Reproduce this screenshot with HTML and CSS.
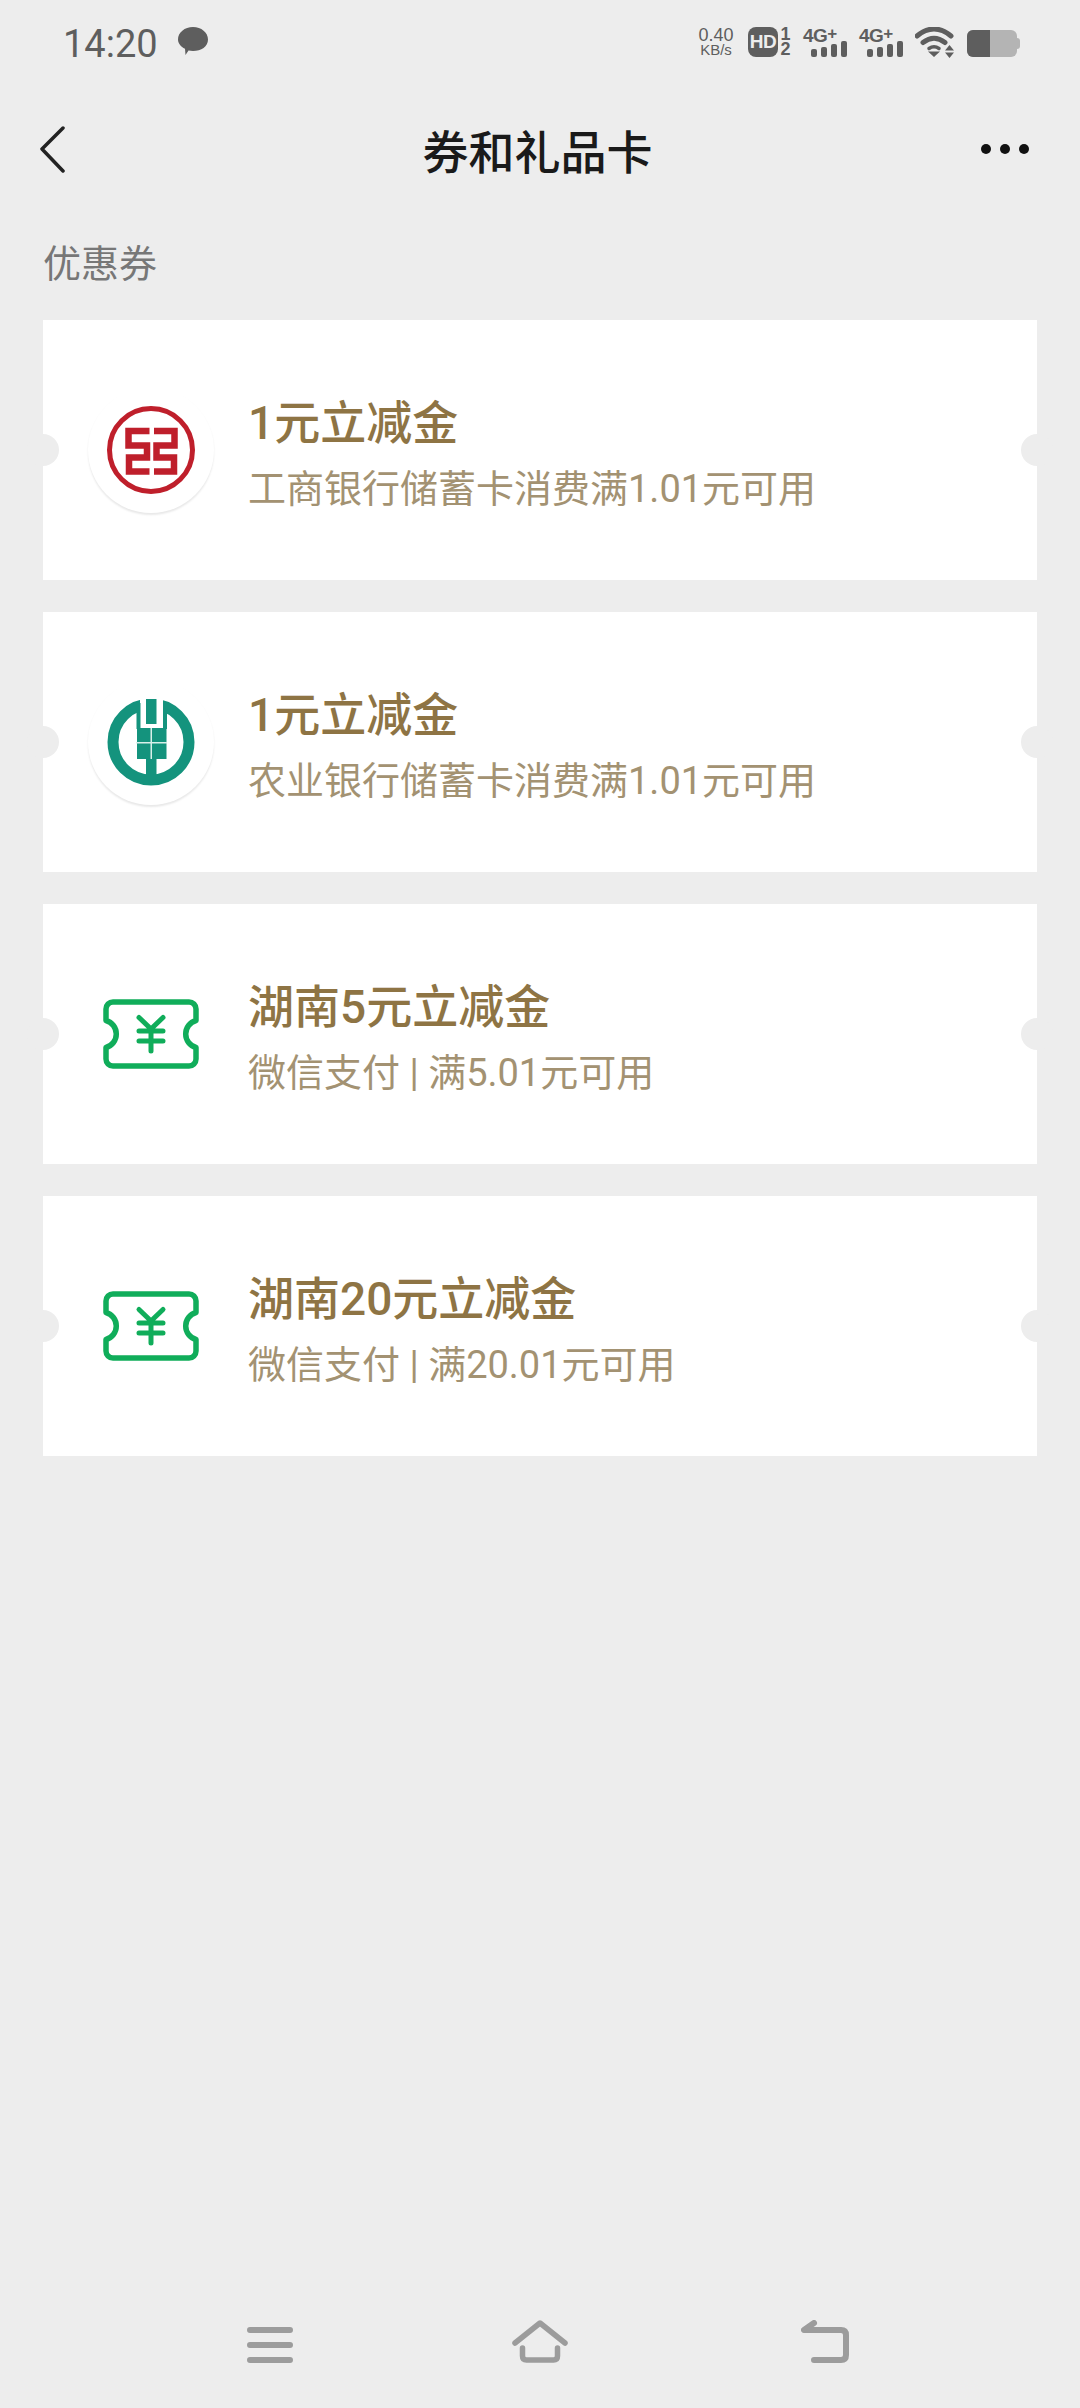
FILE: index.html
```html
<!DOCTYPE html>
<html>
<head>
    <meta charset="utf-8">
    <link rel="stylesheet" href="styles.css">
</head>
<body>
    <div class="page">
        <div class="status-bar">
            <div class="status-left">
                <span class="clock">14:20</span>
                <svg class="chat-icon" width="30" height="28" viewBox="0 0 30 28"><path d="M15 0C23.3 0 30 5.5 30 12.5C30 19.5 23.3 24 15 24C13.5 24 12 23.8 10.5 23.5L7.5 28L7 21.8C2.8 19.7 0 16.4 0 12.5C0 5.5 6.7 0 15 0Z" fill="#5e5e5e"/></svg>
            </div>
            <div class="status-right">
                <div class="net-speed"><span class="speed-num">0.40</span><span class="speed-unit">KB/s</span></div>
                <div class="hd-group">
                    <span class="hd-box">HD</span>
                    <div class="sim-nums"><span>1</span><span>2</span></div>
                </div>
                <div class="net-icon">
                    <div class="net-label">4G<span class="net-plus">+</span></div>
                    <div class="net-bars"><span class="net-bar b1"></span><span class="net-bar b2"></span><span class="net-bar b3"></span><span class="net-bar b4"></span></div>
                </div>
                <div class="net-icon">
                    <div class="net-label">4G<span class="net-plus">+</span></div>
                    <div class="net-bars"><span class="net-bar b1"></span><span class="net-bar b2"></span><span class="net-bar b3"></span><span class="net-bar b4"></span></div>
                </div>
                <svg class="wifi-icon" width="40" height="31" viewBox="0 0 40 31">
                    <path d="M2 9Q19 -5 36 9M8 15.5Q19 7 30 15.5" fill="none" stroke="#5e5e5e" stroke-width="5" stroke-linecap="round"/>
                    <path d="M14 21.5Q19 18 24 21.5" fill="none" stroke="#5e5e5e" stroke-width="3.5" stroke-linecap="round"/>
                    <path d="M13 24.5H25L19 30ZM30 23.5H39L34.5 18ZM30 25.5H39L34.5 31Z" fill="#5e5e5e"/>
                </svg>
                <div class="battery">
                    <div class="battery-body"><div class="battery-level"></div></div>
                    <div class="battery-nub"></div>
                </div>
            </div>
        </div>

        <div class="title-bar">
            <div class="bar-side">
                <svg width="26" height="48" viewBox="0 0 26 48"><path d="M23 3L2 24L23 46" fill="none" stroke="#222" stroke-width="3.5" stroke-linecap="round" stroke-linejoin="round"/></svg>
            </div>
            <div class="bar-title">券和礼品卡</div>
            <div class="bar-side bar-side-right">
                <div class="more-dots"><span class="dot"></span><span class="dot"></span><span class="dot"></span></div>
            </div>
        </div>

        <div class="section-label">优惠券</div>

        <div class="coupon-list">
            <div class="coupon">
                <div class="coupon-badge">
                    <svg width="100" height="100" viewBox="0 0 100 100">
                        <circle cx="50" cy="50" r="41.5" fill="none" stroke="#bf1f2b" stroke-width="5"/>
                        <path d="M48.5 31H27.5V45.5H46V57.5H28V71.5H48.5" fill="none" stroke="#bf1f2b" stroke-width="6.5"/>
                        <path d="M53 31H73.5V45.5H55.5V57.5H73V71.5H53" fill="none" stroke="#bf1f2b" stroke-width="6.5"/>
                    </svg>
                </div>
                <div class="coupon-text">
                    <div class="coupon-title">1元立减金</div>
                    <div class="coupon-desc">工商银行储蓄卡消费满1.01元可用</div>
                </div>
            </div>

            <div class="coupon">
                <div class="coupon-badge">
                    <svg width="100" height="100" viewBox="0 0 100 100">
                        <circle cx="50" cy="50" r="38" fill="none" stroke="#14937d" stroke-width="11"/>
                        <rect x="39" y="0" width="23" height="36" fill="#fff"/>
                        <rect x="35.5" y="11" width="4" height="26" fill="#14937d"/>
                        <rect x="62" y="11" width="4" height="26" fill="#14937d"/>
                        <rect x="45" y="7" width="10.5" height="25" fill="#14937d"/>
                        <rect x="36" y="36" width="29.5" height="31" fill="#14937d"/>
                        <rect x="45" y="67" width="10.5" height="24" fill="#14937d"/>
                        <rect x="49.5" y="36" width="1.5" height="31" fill="#d8efe9"/>
                        <rect x="35" y="50" width="31" height="1.5" fill="#d8efe9"/>
                    </svg>
                </div>
                <div class="coupon-text">
                    <div class="coupon-title">1元立减金</div>
                    <div class="coupon-desc">农业银行储蓄卡消费满1.01元可用</div>
                </div>
            </div>

            <div class="coupon">
                <div class="coupon-badge coupon-badge-plain">
                    <svg width="96" height="70" viewBox="0 0 96 70">
                        <path d="M10 3H86A7 7 0 0 1 93 10V21.5A14 14 0 0 0 93 48.5V60A7 7 0 0 1 86 67H10A7 7 0 0 1 3 60V48.5A14 14 0 0 0 3 21.5V10A7 7 0 0 1 10 3Z" fill="none" stroke="#10ad5a" stroke-width="5.5" stroke-linejoin="round"/>
                        <path d="M36 18.5L48 30L60 18.5M36 32H60M36 42H60M48 30V52" fill="none" stroke="#10ad5a" stroke-width="5" stroke-linecap="round" stroke-linejoin="round"/>
                    </svg>
                </div>
                <div class="coupon-text">
                    <div class="coupon-title">湖南5元立减金</div>
                    <div class="coupon-desc">微信支付 | 满5.01元可用</div>
                </div>
            </div>

            <div class="coupon">
                <div class="coupon-badge coupon-badge-plain">
                    <svg width="96" height="70" viewBox="0 0 96 70">
                        <path d="M10 3H86A7 7 0 0 1 93 10V21.5A14 14 0 0 0 93 48.5V60A7 7 0 0 1 86 67H10A7 7 0 0 1 3 60V48.5A14 14 0 0 0 3 21.5V10A7 7 0 0 1 10 3Z" fill="none" stroke="#10ad5a" stroke-width="5.5" stroke-linejoin="round"/>
                        <path d="M36 18.5L48 30L60 18.5M36 32H60M36 42H60M48 30V52" fill="none" stroke="#10ad5a" stroke-width="5" stroke-linecap="round" stroke-linejoin="round"/>
                    </svg>
                </div>
                <div class="coupon-text">
                    <div class="coupon-title">湖南20元立减金</div>
                    <div class="coupon-desc">微信支付 | 满20.01元可用</div>
                </div>
            </div>
        </div>

        <div class="nav-bar">
            <svg class="nav-menu" width="46" height="46" viewBox="0 0 46 46"><path d="M3 10H43M3 25H43M3 40H43" fill="none" stroke="#9c9c9c" stroke-width="6" stroke-linecap="round"/></svg>
            <svg class="nav-home" width="56" height="46" viewBox="0 0 56 46"><path d="M3 23L28 3L53 23" fill="none" stroke="#9c9c9c" stroke-width="5.5" stroke-linecap="round" stroke-linejoin="round"/><path d="M10.5 28V36Q10.5 40 14.5 40H41.5Q45.5 40 45.5 36V28" fill="none" stroke="#9c9c9c" stroke-width="5.5" stroke-linecap="round"/></svg>
            <svg class="nav-back" width="48" height="46" viewBox="0 0 48 46"><path d="M13 3L3 10H40Q45 10 45 15V35Q45 40 40 40H13" fill="none" stroke="#9c9c9c" stroke-width="6" stroke-linecap="round" stroke-linejoin="round"/></svg>
        </div>
    </div>
</body>
</html>
```

FILE: styles.css
```css
* {
    box-sizing: border-box;
}

html, body {
    margin: 0;
    padding: 0;
}

body {
    background-color: #ededed;
    font-family: Roboto, "Noto Sans CJK SC", sans-serif;
}

.page {
    width: 1080px;
    height: 2408px;
    display: flex;
    flex-direction: column;
    overflow: hidden;
}

/* status bar */
.status-bar {
    height: 88px;
    padding: 27px 60px 0 63px;
    display: flex;
    justify-content: space-between;
    align-items: flex-start;
    flex-shrink: 0;
}

.status-left {
    display: flex;
    align-items: flex-start;
    gap: 20px;
}

.clock {
    font-size: 38px;
    line-height: 34px;
    color: #5e5e5e;
}

.status-right {
    display: flex;
    align-items: flex-start;
    gap: 12px;
    color: #5e5e5e;
    font-family: "Liberation Sans", sans-serif;
}

.net-speed {
    width: 40px;
    display: flex;
    flex-direction: column;
    align-items: center;
}

.speed-num {
    font-size: 18px;
    line-height: 16px;
}

.speed-unit {
    font-size: 15px;
    line-height: 14px;
}

.hd-group {
    display: flex;
    gap: 2px;
}

.hd-box {
    width: 30px;
    height: 30px;
    border-radius: 8px;
    background-color: #5e5e5e;
    color: #ededed;
    font-size: 19px;
    font-weight: bold;
    line-height: 30px;
    letter-spacing: -0.5px;
    text-align: center;
}

.sim-nums {
    display: flex;
    flex-direction: column;
    align-items: center;
    width: 11px;
    font-size: 18px;
    font-weight: bold;
    line-height: 15px;
}

.net-icon {
    width: 44px;
    height: 30px;
    display: flex;
    flex-direction: column;
}

.net-label {
    height: 14px;
    font-size: 19px;
    font-weight: bold;
    line-height: 14px;
    letter-spacing: -0.5px;
    white-space: nowrap;
}

.net-plus {
    font-size: 17px;
    vertical-align: 3px;
}

.net-bars {
    height: 16px;
    display: flex;
    justify-content: flex-end;
    align-items: flex-end;
    gap: 4px;
}

.net-bar {
    width: 6px;
    border-radius: 2px;
    background-color: #5e5e5e;
}

.b1 { height: 8px; }
.b2 { height: 10px; }
.b3 { height: 13px; }
.b4 { height: 16px; }

.battery {
    margin-top: 3px;
    display: flex;
    align-items: center;
}

.battery-body {
    width: 50px;
    height: 27px;
    background-color: #b4b4b4;
    border-radius: 6px;
    overflow: hidden;
}

.battery-level {
    width: 23px;
    height: 100%;
    background-color: #5e5e5e;
}

.battery-nub {
    width: 3px;
    height: 11px;
    background-color: #b4b4b4;
    border-radius: 0 3px 3px 0;
}

/* title bar */
.title-bar {
    height: 122px;
    padding: 0 51px 0 40px;
    display: flex;
    justify-content: space-between;
    align-items: center;
    flex-shrink: 0;
}

.bar-side {
    width: 60px;
    display: flex;
    align-items: center;
}

.bar-side-right {
    justify-content: flex-end;
}

.bar-title {
    margin-left: 6px;
    font-size: 46px;
    font-weight: 500;
    color: #1a1a1a;
}

.more-dots {
    display: flex;
    gap: 9px;
}

.dot {
    width: 10px;
    height: 10px;
    border-radius: 50%;
    background-color: #111;
}

.section-label {
    padding: 29px 0 0 43px;
    height: 110px;
    font-size: 38px;
    line-height: 50px;
    color: #777;
    flex-shrink: 0;
}

/* coupons */
.coupon-list {
    margin: 0 43px;
    display: flex;
    flex-direction: column;
    gap: 32px;
}

.coupon {
    position: relative;
    height: 260px;
    padding-left: 45px;
    background-color: #fff;
    display: flex;
    align-items: center;
    gap: 34px;
}

.coupon::before,
.coupon::after {
    content: "";
    position: absolute;
    top: 114px;
    width: 32px;
    height: 32px;
    border-radius: 50%;
    background-color: #ededed;
}

.coupon::before {
    left: -16px;
}

.coupon::after {
    right: -16px;
}

.coupon-badge {
    width: 126px;
    height: 126px;
    border-radius: 50%;
    background-color: #fff;
    box-shadow: 0 2px 2px rgba(0, 0, 0, 0.09);
    display: flex;
    align-items: center;
    justify-content: center;
    flex-shrink: 0;
}

.coupon-badge-plain {
    box-shadow: none;
    background: none;
}

.coupon-text {
    padding-top: 10px;
    display: flex;
    flex-direction: column;
    gap: 18px;
}

.coupon-title {
    font-size: 46px;
    line-height: 50px;
    font-weight: 500;
    color: #8e7444;
}

.coupon-desc {
    font-size: 38px;
    line-height: 46px;
    color: #a39272;
}

/* bottom nav */
.nav-bar {
    margin-top: auto;
    height: 88px;
    padding: 0 0 0 247px;
    display: flex;
    align-items: flex-start;
    flex-shrink: 0;
}

.nav-menu {
    margin-right: 219px;
}

.nav-home {
    margin-right: 233px;
}
```
